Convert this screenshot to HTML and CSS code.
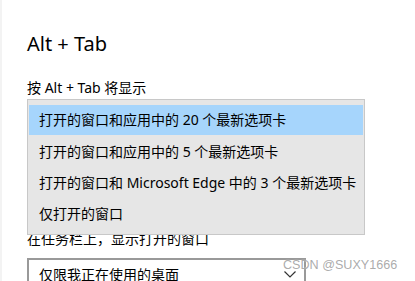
FILE: index.html
```html
<!DOCTYPE html>
<html lang="zh-CN">
<head>
  <meta charset="UTF-8" />
  <title>Alt + Tab</title>
  <link rel="stylesheet" href="styles.css">
</head>
<body>

  <div class="page">
    <h2 class="title">Alt + Tab</h2>

    <p class="label">按 Alt + Tab 将显示</p>
    <div class="combo-wrap">
      <!-- closed box sits under the open list -->
      <div class="combo under"></div>
      <ul class="dropdown">
        <li class="selected">打开的窗口和应用中的 20 个最新选项卡</li>
        <li>打开的窗口和应用中的 5 个最新选项卡</li>
        <li>打开的窗口和 Microsoft Edge 中的 3 个最新选项卡</li>
        <li>仅打开的窗口</li>
      </ul>
    </div>

    <p class="label second">在任务栏上，显示打开的窗口</p>
    <div class="combo">
      <span>仅限我正在使用的桌面</span>
      <svg class="chevron" width="12" height="7" viewBox="0 0 12 7">
        <polyline points="0.5,0.5 6,6 11.5,0.5" fill="none" stroke="#333" stroke-width="1.2" />
      </svg>
    </div>
  </div>

  <div class="watermark">CSDN @SUXY1666</div>

</body>
</html>
```

FILE: styles.css
```css
html, body {
  margin: 0;
  height: 100%;
  overflow: hidden;
}

body {
  font-family: "Noto Sans", "Noto Sans CJK SC", sans-serif;
  background-color: #fff;
  color: #000;
  border-left: 2px solid #f3f3f3;
}

.page {
  padding-left: 25px;
}

.title {
  margin: 30px 0 0 0;
  font-size: 20px;
  line-height: 28px;
  font-weight: normal;
}

.label {
  margin: 20px 0 0 0;
  font-size: 14px;
  line-height: 20px;
}

.label.second {
  margin-top: 98px;
}

.combo-wrap {
  position: relative;
  margin-top: 1px;
}

.combo {
  width: 257px;
  height: 28px;
  border: 2px solid #999;
  display: flex;
  align-items: center;
  justify-content: space-between;
  padding: 0 8px 0 10px;
  font-size: 14px;
  box-sizing: content-box;
}

.label.second + .combo {
  margin-top: 9px;
}

.chevron {
  display: block;
}

/* open list covers the closed box */
.dropdown {
  position: absolute;
  left: 0;
  top: 0;
  width: 334px;
  margin: 0;
  padding: 5px 1px;
  list-style: none;
  background-color: #e6e6e6;
  border: 1px solid #c8c8c8;
  box-sizing: content-box;
}

.dropdown li {
  height: 31px;
  line-height: 31px;
  padding-left: 10px;
  font-size: 14px;
  white-space: nowrap;
}

.dropdown li.selected {
  background-color: #a6d5fc;
  height: 30px;
  line-height: 30px;
  margin-bottom: 1px;
}

.watermark {
  position: absolute;
  left: 283px;
  top: 258px;
  font-family: "Liberation Sans", Arial, sans-serif;
  font-size: 12.6px;
  color: rgba(150, 150, 150, 0.8);
  text-shadow: 0 0 1px #fff;
}
```
